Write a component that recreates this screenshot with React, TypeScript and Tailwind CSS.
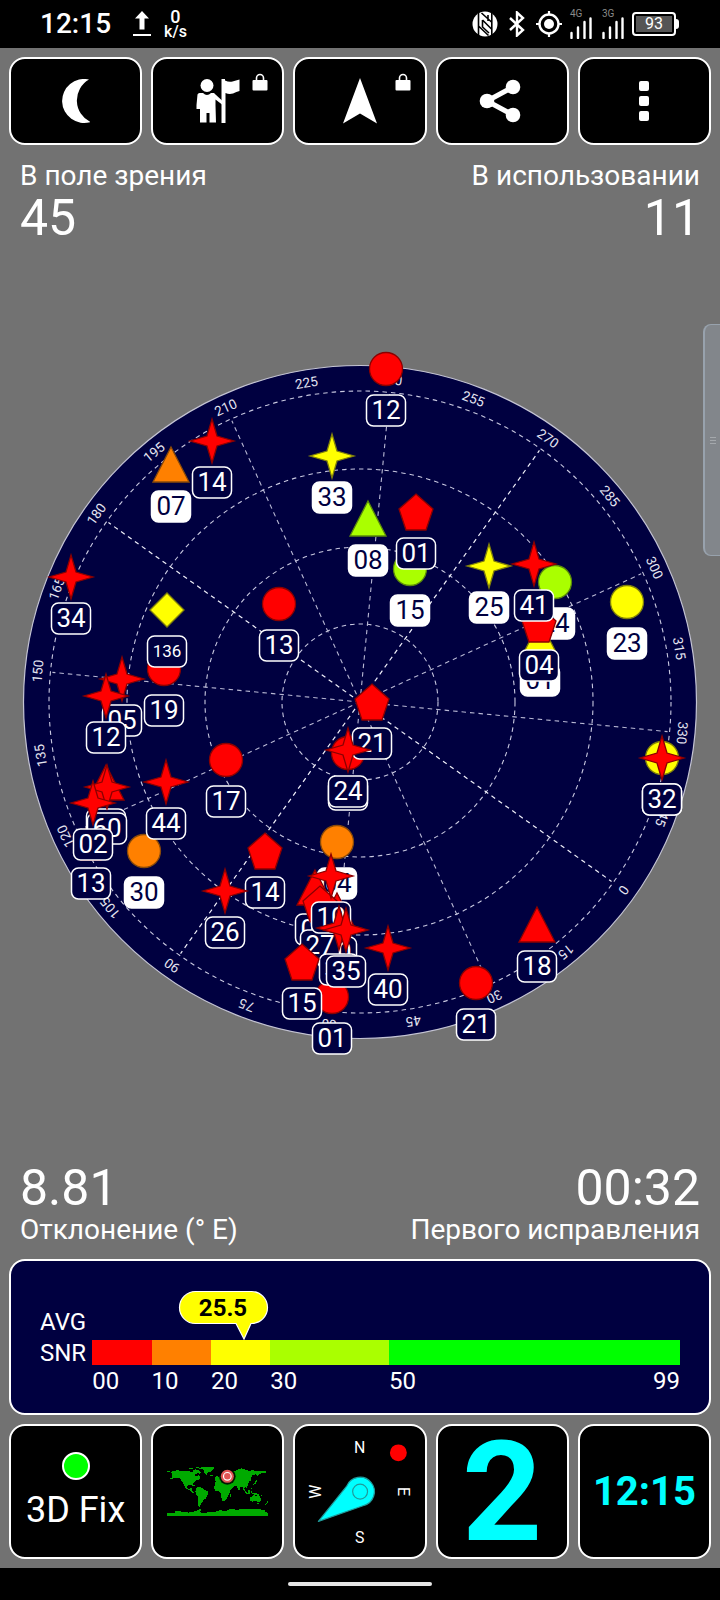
import type { ReactNode } from "react";

type Shape = "circle" | "star" | "triangle" | "pentagon" | "diamond";

type Satellite = {
  id: string;
  shape: Shape;
  color: string;
  x: number;
  y: number;
  used?: boolean;
};

const RED = "#ff0000";
const ORANGE = "#ff8000";
const YELLOW = "#ffff00";
const LIME = "#aaff00";
const GREEN = "#00ff00";
const NAVY = "#000040";

// later items are painted over earlier ones
const satellites: Satellite[] = [
  { id: "12", shape: "circle", color: RED, x: 386, y: 369 },
  { id: "14", shape: "star", color: RED, x: 212, y: 441 },
  { id: "07", shape: "triangle", color: ORANGE, x: 171, y: 465, used: true },
  { id: "33", shape: "star", color: YELLOW, x: 332, y: 456, used: true },
  { id: "08", shape: "triangle", color: LIME, x: 368, y: 519, used: true },
  { id: "15", shape: "circle", color: LIME, x: 410, y: 569, used: true },
  { id: "01", shape: "pentagon", color: RED, x: 416, y: 512 },
  { id: "25", shape: "star", color: YELLOW, x: 489, y: 566, used: true },
  { id: "24", shape: "circle", color: LIME, x: 555, y: 582, used: true },
  { id: "01", shape: "triangle", color: YELLOW, x: 540, y: 639, used: true },
  { id: "04", shape: "pentagon", color: RED, x: 539, y: 624 },
  { id: "41", shape: "star", color: RED, x: 534, y: 564 },
  { id: "23", shape: "circle", color: YELLOW, x: 627, y: 602, used: true },
  { id: "34", shape: "star", color: RED, x: 71, y: 577 },
  { id: "13", shape: "circle", color: RED, x: 279, y: 604 },
  { id: "19", shape: "circle", color: RED, x: 164, y: 669 },
  { id: "136", shape: "diamond", color: YELLOW, x: 167, y: 610 },
  { id: "05", shape: "star", color: RED, x: 122, y: 679 },
  { id: "12", shape: "star", color: RED, x: 106, y: 696 },
  { id: "24", shape: "circle", color: RED, x: 348, y: 753 },
  { id: "21", shape: "pentagon", color: RED, x: 372, y: 702 },
  { id: "24", shape: "star", color: RED, x: 348, y: 750 },
  { id: "17", shape: "circle", color: RED, x: 226, y: 760 },
  { id: "30", shape: "circle", color: ORANGE, x: 144, y: 851, used: true },
  { id: "44", shape: "star", color: RED, x: 166, y: 782 },
  { id: "13", shape: "pentagon", color: RED, x: 91, y: 842 },
  { id: "03", shape: "triangle", color: RED, x: 106, y: 783 },
  { id: "60", shape: "star", color: RED, x: 107, y: 787 },
  { id: "02", shape: "star", color: RED, x: 93, y: 803 },
  { id: "14", shape: "pentagon", color: RED, x: 265, y: 851 },
  { id: "26", shape: "star", color: RED, x: 225, y: 891 },
  { id: "04", shape: "circle", color: ORANGE, x: 337, y: 842, used: true },
  { id: "05", shape: "triangle", color: RED, x: 315, y: 888 },
  { id: "20", shape: "triangle", color: RED, x: 337, y: 911 },
  { id: "27", shape: "pentagon", color: RED, x: 320, y: 904 },
  { id: "10", shape: "star", color: RED, x: 331, y: 876 },
  { id: "01", shape: "circle", color: RED, x: 332, y: 997 },
  { id: "33", shape: "star", color: RED, x: 339, y: 928 },
  { id: "35", shape: "star", color: RED, x: 346, y: 930 },
  { id: "15", shape: "pentagon", color: RED, x: 302, y: 962 },
  { id: "40", shape: "star", color: RED, x: 388, y: 948 },
  { id: "21", shape: "circle", color: RED, x: 476, y: 983 },
  { id: "18", shape: "triangle", color: RED, x: 537, y: 925 },
  { id: "32", shape: "circle", color: YELLOW, x: 662, y: 758, used: true },
  { id: "32", shape: "star", color: RED, x: 662, y: 758 },
];

const outlines: Record<Exclude<Shape, "circle">, string> = {
  star: "0,-22 5,-5 22,0 5,5 0,22 -5,5 -22,0 -5,-5",
  triangle: "0,-18 18,17 -18,17",
  pentagon: "0,-18 17,-3 10,18 -10,18 -17,-3",
  diamond: "0,-17 17,0 0,17 -17,0",
};

const strokes: Record<string, string> = {
  [RED]: "#8b0000",
  [ORANGE]: "#8a4a08",
  [YELLOW]: "#80800a",
  [LIME]: "#5b8a0a",
};

const snrScale = [
  { from: "00", span: 10, color: RED },
  { from: "10", span: 10, color: ORANGE },
  { from: "20", span: 10, color: YELLOW },
  { from: "30", span: 20, color: LIME },
  { from: "50", to: "99", span: 49, color: GREEN },
];

const SatelliteMarker = ({ id, shape, color, x, y, used }: Satellite) => {
  return (
    <g transform={`translate(${x} ${y})`}>
      {shape === "circle" ? (
        <circle r={16.5} fill={color} stroke={strokes[color]} strokeWidth={1.3} />
      ) : (
        <polygon
          points={outlines[shape]}
          fill={color}
          stroke={strokes[color]}
          strokeWidth={1.3}
        />
      )}
      <rect
        x={-19.5}
        y={26}
        width={39}
        height={31}
        rx={7}
        fill={used ? "#fff" : NAVY}
        stroke="#fff"
        strokeWidth={1.5}
      />
      <text
        y={id.length > 2 ? 47 : 50}
        textAnchor="middle"
        fontSize={id.length > 2 ? 17 : 26}
        fill={used ? NAVY : "#fff"}
      >
        {id}
      </text>
    </g>
  );
};

const CX = 360;
const CY = 702;
// screen bearing at which azimuth 0 is drawn
const NORTH = 125.5;

const SkyPlot = () => {
  const azimuths = Array.from({ length: 24 }, (_, i) => i * 15);
  return (
    <svg viewBox="0 353 720 700" className="block w-full overflow-visible">
      <circle cx={CX} cy={CY} r={336.5} fill={NAVY} stroke="#c4c4d4" strokeWidth={1.2} />
      <g fill="none" stroke="#c8c8e0" strokeWidth={1.1} strokeDasharray="4.500 4">
        {[78, 155, 233, 311].map((r) => (
          <circle key={r} cx={CX} cy={CY} r={r} />
        ))}
        {azimuths
          .filter((a) => a % 30 === 0)
          .map((a) => (
            <line
              key={a}
              x1={CX}
              y1={CY}
              x2={CX}
              y2={CY - 309}
              stroke={a % 90 === 0 ? "#f0f0fa" : "#b8b8d4"}
              strokeWidth={a % 90 === 0 ? 1.2 : 1.1}
              transform={`rotate(${NORTH + a} ${CX} ${CY})`}
            />
          ))}
      </g>
      <g fill="#e4e4f0" fontSize={13.5} textAnchor="middle">
        {azimuths.map((a) => (
          <text
            key={a}
            x={CX}
            y={CY - 319}
            transform={`rotate(${NORTH + a} ${CX} ${CY})`}
          >
            {a}
          </text>
        ))}
      </g>
      {satellites.map((sat, i) => (
        <SatelliteMarker key={i} {...sat} />
      ))}
    </svg>
  );
};

const Tile = ({
  label,
  className,
  children,
}: {
  label: string;
  className: string;
  children: ReactNode;
}) => {
  return (
    <button
      type="button"
      aria-label={label}
      className={`relative flex min-w-0 flex-1 items-center justify-center rounded-2xl border-2 border-white bg-black ${className}`}
    >
      {children}
    </button>
  );
};

const Lock = () => (
  <svg
    width={16}
    height={18}
    viewBox="0 0 16 18"
    className="absolute top-[14px] right-[14px]"
  >
    <rect x={0.5} y={7} width={15} height={10.5} rx={1} fill="#fff" />
    <path d="M4.5 8V5a3.5 3.5 0 0 1 7 0v3" fill="none" stroke="#fff" strokeWidth={1.6} />
  </svg>
);

const Signal = ({ type }: { type: string }) => (
  <svg width={24} height={30} viewBox="0 0 24 30">
    <text x={1} y={8} fontSize={10} fill="#8a8a8a">
      {type}
    </text>
    <path
      d="M2.5 24v5M9 18.500v10.500M15.500 13V29M21.500 9.500V29"
      stroke="#fff"
      strokeWidth={2.4}
      strokeLinecap="round"
    />
  </svg>
);

const StatusBar = () => {
  return (
    <header className="flex h-12 items-center justify-between bg-black pr-[41px] pl-10">
      <div className="flex items-center">
        <span className="text-[28px] leading-8 font-medium">12:15</span>
        <svg width={20} height={26} viewBox="0 0 20 26" className="ml-[21px]">
          <path d="M10 0l7 7.500h-4.500V18.500h-5V7.500H3z" fill="#fff" />
          <path d="M1 24h18" stroke="#fff" strokeWidth={2} />
        </svg>
        <div className="ml-3 flex flex-col items-center font-medium">
          <span className="text-lg leading-4">0</span>
          <span className="text-base leading-[14px]">k/s</span>
        </div>
      </div>
      <div className="flex items-center">
        <svg width={26} height={26} viewBox="0 0 26 26">
          <circle cx={13} cy={13} r={12.5} fill="#fff" />
          <path
            d="M6.500 0v26M19.800 0v26M9.500 2l10 9M6.500 15l10 9.500M10.500 9v7l6.500 6M10.500 9l9 9M16 4v6"
            fill="none"
            stroke="#000"
            strokeWidth={1.6}
          />
        </svg>
        <svg width={18} height={26} viewBox="0 0 18 26" className="ml-[10px]">
          <path
            d="M2 7l13 12-6 5.500V1.500L15 7 2 19"
            fill="none"
            stroke="#fff"
            strokeWidth={2.4}
          />
        </svg>
        <svg width={26} height={26} viewBox="0 0 26 26" className="ml-[10px]">
          <circle cx={13} cy={13} r={9.5} fill="none" stroke="#fff" strokeWidth={2.4} />
          <circle cx={13} cy={13} r={5} fill="#fff" />
          <path d="M13 0v4M13 22v4M0 13h4M22 13h4" stroke="#fff" strokeWidth={2.2} />
        </svg>
        <span className="ml-[7px] flex gap-2">
          <Signal type="4G" />
          <Signal type="3G" />
        </span>
        <div className="ml-[7px] flex items-center">
          <div className="flex h-6 w-11 items-center rounded border-2 border-white p-[2px]">
            <div className="flex h-full w-full items-center justify-center bg-[#555] text-base leading-4">
              93
            </div>
          </div>
          <div className="h-[10px] w-[3px] rounded-r-sm bg-white" />
        </div>
      </div>
    </header>
  );
};

const Toolbar = () => {
  return (
    <nav className="flex gap-[9px]">
      <Tile label="Night mode" className="h-[88px]">
        <svg width={28} height={44} viewBox="0 0 28 44">
          <path
            d="M27 .5A22 22 0 1 0 28.500 43A24 24 0 0 1 27 .500z"
            fill="#fff"
          />
        </svg>
      </Tile>
      <Tile label="Waypoint" className="h-[88px]">
        <svg width={44} height={44} viewBox="0 0 44 44">
          <g fill="#fff">
            <circle cx={11} cy={6.5} r={6.5} />
            <path d="M3.500 14h3.500q4 4 8 0h3l1.500 1.500 6.500 6v4l-6.500-5v6l.500 17h-6.500v-9.500h-3V43.500H4V30H.500V26l1-10.500q.500-1.500 2-1.500z" />
            <path d="M25.500 0H29v1.500q4 2 7.500 1 3.500-1 7-2v11.500q-3 .500-6.500 2.500-4 1-7.500-.500v30h-4z" />
          </g>
        </svg>
        <Lock />
      </Tile>
      <Tile label="Navigate" className="h-[88px]">
        <svg width={36} height={46} viewBox="0 0 36 46">
          <path d="M18 0l17 45.500-17-10-17 10z" fill="#fff" />
        </svg>
        <Lock />
      </Tile>
      <Tile label="Share" className="h-[88px]">
        <svg width={42} height={44} viewBox="0 0 42 44" className="-ml-1">
          <path d="M34 8L8 22l26 14" fill="none" stroke="#fff" strokeWidth={5} />
          <circle cx={34} cy={8} r={7.3} fill="#fff" />
          <circle cx={8} cy={22} r={7.3} fill="#fff" />
          <circle cx={34} cy={36} r={7.3} fill="#fff" />
        </svg>
      </Tile>
      <Tile label="Menu" className="h-[88px]">
        <span className="flex flex-col gap-[5px]">
          <span className="size-[10px] rounded-[2px] bg-white" />
          <span className="size-[10px] rounded-[2px] bg-white" />
          <span className="size-[10px] rounded-[2px] bg-white" />
        </span>
      </Tile>
    </nav>
  );
};

const SnrPanel = () => {
  const average = 25.5;
  return (
    <section className="flex gap-[6px] rounded-2xl border-2 border-white bg-[#000040] px-[29px] pt-[45px] pb-4 text-2xl leading-8">
      <div className="pt-px leading-[31px]">
        <p>AVG</p>
        <p>SNR</p>
      </div>
      <div className="relative flex-1 pt-[34px]">
        <div
          className="absolute -top-4 -ml-[66px]"
          style={{ left: `${(average / 99) * 100}%` }}
        >
          <svg width={92} height={50} viewBox="0 0 92 50">
            <path
              d="M17.500 1.500H73.500a16 16 0 0 1 0 32h-.500L66 49 58 33.500H17.500A16 16 0 0 1 17.500 1.500z"
              fill={YELLOW}
              stroke="#fff"
              strokeWidth={1.2}
            />
            <text x={45} y={25.5} textAnchor="middle" fontSize={24} fontWeight={700} fill="#000">
              {average}
            </text>
          </svg>
        </div>
        <div className="flex h-[25px]">
          {snrScale.map((s) => (
            <div key={s.from} style={{ flex: s.span, background: s.color }} />
          ))}
        </div>
        <div className="flex">
          {snrScale.map((s) => (
            <div
              key={s.from}
              className="flex w-0 justify-between"
              style={{ flexGrow: s.span }}
            >
              <span>{s.from}</span>
              {s.to && <span>{s.to}</span>}
            </div>
          ))}
        </div>
      </div>
    </section>
  );
};

const WorldMap = () => (
  <svg viewBox="18 20 312 154" className="w-[104px]" shapeRendering="crispEdges">
    <g fill="#00aa00">
      <path d="M20 36h8l3 3h-8zM34 38l6-4 14-1 10 2 14 1 10-1 6 4 8-1 4-5 8 2-2 7-8 3 4 7 8-4 6 8-4 4-8 2-6 6-6 5-1 6-8-2-8 3 2 8 6 1 3-4 4 2-2 6 6 5 4 3-6-1-10-7-10-5-6-9-4-11-8-10-9-3-10 2-8 4-3-3 7-4z" />
      <path d="M84 26h12l4 4H88zM98 32l10-2 8 3 8 8-6 3-8-6-10-1zM104 25l14-2v4h-12zM118 26l10-3 34 1v4l-6 6-6 4-6 2-5 7-5-4-2-8-4-5-10-1z" />
      <path d="M95 78h9v3h-9zM108 86l6-3 12 2 8 6 10 5 2 5-5 8-3 8-8 5-3 7-5 5-2 8h-4l-2-6 1-12-1-11-6-8-2-8z" />
      <path d="M165 58l3-8h5l1 9-5 2zM164 72l4-6 16-3 5 4 13 1 5 5 3 9h8l-2 7-7 7-1 8-3 5-5 11-5 5h-7l-4-11-1-12-6-6h-9l-5-7z" />
      <path d="M166 64v-5l7-3 5-6 8-4-2-5 7-7 9-2 14 4 12-2 10-5 9-2 8 3 14 4 14-1 12 3 24-1v5l-8 1-12 3-3 8-4-5-3-2-11 4-3 8-1 7-6 4-1 8-4 5 2 5-5-2-7 2 4 7-6-3-2-9-5 2-4 9-4-1-4-10-6-2-4 6-7 3-4-8-4-6-9 1-4-7-6 6-2-4-6 6zM151 46h7v4h-7z" />
      <path d="M210 105h4v8l-4 2zM236 92h2v4h-2zM254 92l6 8-3 1-6-8zM264 92l6 2-1 7-6-2zM273 94h3v6h-3zM259 102h10v3h-10zM276 100l12 1 9 5-3 3-10-3-8-2zM274 84l3 5h-4zM288 60l4 5-7 10-6 2 6-7zM270 115l6-4 6-4 4 3 6 1 3-6 5 8 4 6-2 7-6 3-6-3-6-1-6 2-7-1zM292 131h5v3h-5zM322 126l3 3-3 3zM318 131l3 2-5 6-3-1zM302 106h3v3h-3zM318 112h3v2h-3z" />
      <path d="M20 171v-8l10-2 14-1 2-4 30 1 10 3 16-3 4-3 8-1 6-5 4 2-4 8 12 5 10-4 20-1 18-5 18 2 8-4 10-2 16 3 14-4h44l12 2 12 3v3l9 5v10z" />
    </g>
    <g shapeRendering="auto">
      <circle cx={202} cy={51} r={25} fill="#000" fillOpacity={0.85} />
      <circle cx={202} cy={51} r={19.5} fill="#e05555" />
      <circle cx={202} cy={51} r={11.5} fill="none" stroke="#fff" strokeWidth={3.500} />
    </g>
  </svg>
);

const Compass = () => (
  <svg viewBox="0 0 130 130" className="w-full">
    <g fill="#fff" fontSize={16} textAnchor="middle">
      <text x={65} y={26}>N</text>
      <text x={65} y={117}>S</text>
      <text x={65} y={26.500} transform="rotate(-90 65 65)">W</text>
      <text x={65} y={26.500} transform="rotate(90 65 65)">E</text>
    </g>
    <circle cx={104} cy={26} r={8.5} fill={RED} />
    <path
      d="M23.500 95L52 59.500A14.500 14.500 0 1 1 68.500 79.200z"
      fill="#00ffff"
      stroke="#1f9a9a"
      strokeWidth={1.2}
      strokeLinejoin="round"
    />
    <circle cx={65.5} cy={65} r={7.5} fill="#00ffff" stroke="#1f9a9a" strokeWidth={1.2} />
  </svg>
);

const BottomTiles = () => {
  return (
    <nav className="flex gap-[9px]">
      <Tile label="3D Fix" className="h-[135px] flex-col gap-[6px] pt-[2px]">
        <span className="size-7 rounded-full border-2 border-white bg-[#00ff00]" />
        <span className="text-4xl leading-[48px]">3D Fix</span>
      </Tile>
      <Tile label="World map" className="h-[135px]">
        <WorldMap />
      </Tile>
      <Tile label="Compass" className="h-[135px]">
        <Compass />
      </Tile>
      <Tile label="Speed" className="h-[135px]">
        <span className="text-[140px] leading-[128px] font-bold text-[#00ffff]">2</span>
      </Tile>
      <Tile label="Time" className="h-[135px]">
        <span className="text-[40px] leading-[48px] font-bold text-[#00ffff]">12:15</span>
      </Tile>
    </nav>
  );
};

const Stat = ({
  label,
  value,
  className,
}: {
  label: string;
  value: string;
  className: string;
}) => {
  return (
    <div className={`flex ${className}`}>
      <dt className="text-[28px] leading-8">{label}</dt>
      <dd className="text-[50px] leading-[52px]">{value}</dd>
    </div>
  );
};

const App = () => {
  return (
    <div className="relative flex min-h-screen flex-col bg-[#727272] font-[Roboto,sans-serif] text-white">
      <StatusBar />
      <main className="flex flex-1 flex-col p-[9px]">
        <Toolbar />
        <dl className="flex justify-between px-[11px] pt-[15px]">
          <Stat label="В поле зрения" value="45" className="flex-col" />
          <Stat label="В использовании" value="11" className="flex-col items-end" />
        </dl>
        <div className="-mx-[9px] flex flex-1 items-center">
          <SkyPlot />
        </div>
        <dl className="flex justify-between px-[11px] pb-[13px]">
          <Stat label="Отклонение (° E)" value="8.81" className="flex-col-reverse" />
          <Stat
            label="Первого исправления"
            value="00:32"
            className="flex-col-reverse items-end"
          />
        </dl>
        <div className="flex flex-col gap-[9px]">
          <SnrPanel />
          <BottomTiles />
        </div>
      </main>
      <footer className="flex h-8 items-center justify-center bg-black">
        <div className="h-1 w-36 rounded-full bg-[#e6e6e6]" />
      </footer>
      <aside className="absolute top-[324px] right-0 flex h-[232px] w-[17px] flex-col items-center justify-center gap-[2px] rounded-l-lg border-y border-l-2 border-[#98a2ad] bg-[#82868b]">
        <span className="h-px w-[6px] bg-[#a4a8ac]" />
        <span className="h-px w-[6px] bg-[#a4a8ac]" />
        <span className="h-px w-[6px] bg-[#a4a8ac]" />
      </aside>
    </div>
  );
};

export default App;
